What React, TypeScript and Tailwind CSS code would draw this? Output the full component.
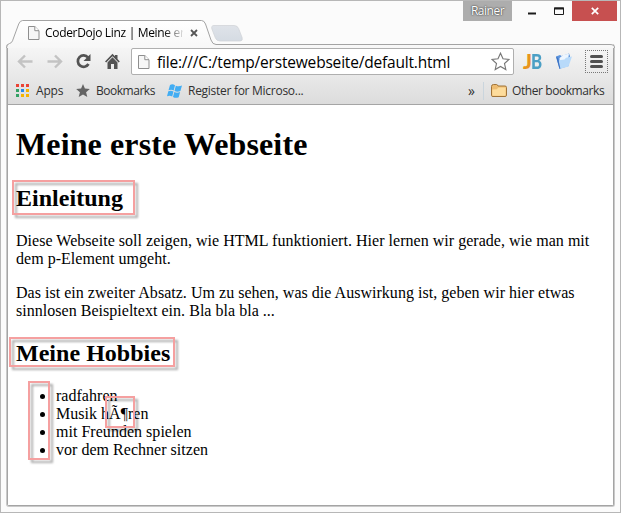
import React from 'react';

const ui = "font-['Open_Sans','Noto_Sans',sans-serif]";

function PageIcon({ className = '' }: { className?: string }) {
  return (
    <svg width="12" height="14" viewBox="0 0 12 14" className={className}>
      <path d="M.5.5h6.3l4.2 4.2v8.8H.5z" fill="#f6f6f6" stroke="#8e8e8e" />
      <path d="M6.8.5v4.2H11" fill="#fff" stroke="#8e8e8e" />
    </svg>
  );
}

function TabStrip() {
  return (
    <header className="relative z-10 h-[43px] shrink-0">
      <svg width="619" height="47" viewBox="1 1 619 47" className="absolute left-0 top-0">
        <defs>
          <linearGradient id="tab" x1="0" y1="0" x2="0" y2="1">
            <stop offset="0" stopColor="#fff" />
            <stop offset="1" stopColor="#f7f7f7" />
          </linearGradient>
          <linearGradient id="newtab" x1="0" y1="0" x2="0" y2="1">
            <stop offset="0" stopColor="#dfe3e9" />
            <stop offset="1" stopColor="#d5dbe3" />
          </linearGradient>
        </defs>
        <path
          d="M6.500 48q0-4 3-4.500 2-.3 3-2.700L18.700 24q1.300-3.500 4-3.500H201.500q2.700 0 4 3.500L211 40q1.500 4.500 5 4.500H610q4.500 0 4.500 3.500"
          fill="url(#tab)"
          stroke="#a3a3a3"
        />
        <path d="M214 25.500h20q3.500 0 4.600 3l3.500 9q1 3.500-2 3.500h-20q-3.500 0-4.700-3l-3.500-9q-1-3.500 2.100-3.500z" fill="url(#newtab)" stroke="#ced1d5" strokeWidth=".7" />
      </svg>
      <div className="relative flex h-full items-start">
        <div className="mt-[20px] flex h-[24px] w-[204px] items-center pl-[27px]">
          <PageIcon />
          <span className={`${ui} ml-[5px] w-[138px] whitespace-nowrap bg-linear-to-r from-black from-86% to-black/10 bg-clip-text text-[12px] leading-[18px] tracking-[-0.320px] text-transparent`}>
            CoderDojo Linz | Meine er
          </span>
          <svg width="8" height="8" viewBox="0 0 8 8" className="ml-[7px] shrink-0">
            <path d="M1 1l6 6M7 1L1 7" stroke="#555" strokeWidth="1.800" />
          </svg>
        </div>
        <div className="ml-auto mr-[3px] flex h-[20px]">
          <div className={`${ui} flex h-[20px] w-[49px] items-center justify-center bg-[#adadad] text-[12px] tracking-[-0.5px] text-white [text-shadow:0_0_2px_#333,0_0_1px_#555]`}>
            Rainer
          </div>
          <svg width="60" height="20" viewBox="0 0 60 20">
            <path d="M16 12.500h8" stroke="#1c1c1c" strokeWidth="2" />
            <path d="M42.500 13.500v-6.500h9v6.500z" fill="none" stroke="#1c1c1c" />
            <path d="M42 7.500h10" stroke="#1c1c1c" strokeWidth="2" />
          </svg>
          <div className="flex h-[20px] w-[45px] items-center justify-center bg-[#c75050]">
            <svg width="8" height="8" viewBox="0 0 8 8">
              <path d="M.8.8l6.400 6.400M7.200.8L.8 7.200" stroke="#fff" strokeWidth="1.700" />
            </svg>
          </div>
        </div>
      </div>
    </header>
  );
}

function AddressRow() {
  return (
    <div className="relative z-20 flex h-[34px] items-center">
      <svg width="124" height="34" viewBox="8 45 124 34" className="shrink-0">
        <g fill="none" stroke="#c3c3c3" strokeWidth="2.400">
          <path d="M19 62.500h13.500M25 56.500l-6 6 6 6" />
          <path d="M47.500 62.500H61M55 56.500l6 6-6 6" />
        </g>
        <path d="M88 58.500A5.700 5.700 0 1 0 88.500 65" fill="none" stroke="#535353" strokeWidth="2.700" />
        <path d="M90.500 55v7h-7z" fill="#535353" />
        <path d="M105 62.500l7.500-7.700 2.500 2.500V56h2.500v4l2.300 2.500-1.200 1.100-6.100-6.400-6.300 6.400z" fill="#535353" />
        <path d="M107.500 63.500l5-5.300 5 5.300V70h-3.500v-5h-3v5h-3.500z" fill="#535353" />
      </svg>
      <div className="mt-px -ml-px flex h-[27px] w-[383px] shrink-0 items-center rounded-[2px] border border-[#afafaf] bg-white pl-[6px] pr-[3px]">
        <PageIcon className="shrink-0" />
        <span className={`${ui} ml-[7px] whitespace-nowrap text-[15.500px] leading-[22px] text-black tracking-[-0.190px]`}>
          file:///C:/temp/erstewebseite/default.html
        </span>
        <svg width="19" height="19" viewBox="0 0 19 19" className="ml-auto shrink-0">
          <path d="M9.500 1.200l2.500 5.600 6 .6-4.500 4.100 1.300 6-5.300-3.100-5.300 3.100 1.300-6L1 7.400l6-.6z" fill="#fff" stroke="#777" strokeWidth="1.150" />
        </svg>
      </div>
      <div className="ml-[9px] flex w-[20px] text-[21px] leading-[24px] font-black tracking-[-1px] font-['Lato',sans-serif]">
        <span className="w-[8px] text-[#e8951d]">J</span>
        <span className="inline-block origin-left scale-x-[.8] text-[#4b9fc5]">B</span>
      </div>
      <svg width="18" height="18" viewBox="0 0 18 18" className="ml-[12px] shrink-0">
        <path d="M1 4.500l4-1.500 1.500 1L14 1.500 15 4 13.500 14l-9 2.800z" fill="#5b93dd" />
        <path d="M4.500 6l4-3.200 5.500-1-1.500 9-8 3z" fill="#edf6ff" />
        <path d="M4 8.200l5.500-.7 1.500-1.800L17 4.500 13.500 14.500 4.500 17z" fill="#b8dafa" />
        <path d="M1 4.500L4.500 17l.9-.5L3 6z" fill="#3d73c5" />
      </svg>
      <div className="ml-[12px] mt-px flex h-[23px] w-[23px] shrink-0 items-center justify-center border border-dotted border-[#777]">
        <div className="flex w-[13px] flex-col gap-[2px]">
          <i className="h-[3px] rounded-full bg-[#505050]" />
          <i className="h-[3px] rounded-full bg-[#505050]" />
          <i className="h-[3px] rounded-full bg-[#505050]" />
        </div>
      </div>
    </div>
  );
}

const apps = ['#ea4335', '#ea4335', '#ea4335', '#34a165', '#268bea', '#f5b400', '#34a165', '#f5b400', '#f5b400'];

function BookmarksRow() {
  return (
    <div className={`${ui} flex h-[25px] items-center whitespace-nowrap text-[12px] leading-[18px] text-[#303030]`}>
      <div className="ml-[8px] grid w-[13px] shrink-0 grid-cols-3 gap-[2px]">
        {apps.map((c, i) => (
          <i key={i} className="h-[3px] w-[3px]" style={{ background: c }} />
        ))}
      </div>
      <span className="ml-[7px] w-[40px] tracking-[-0.2px]">Apps</span>
      <svg width="14" height="13" viewBox="0 0 14 13" className="shrink-0">
        <path d="M7 0l1.900 4.600 4.900.4-3.700 3.200 1.200 4.800L7 10.400 2.700 13l1.200-4.800L.2 5l4.900-.4z" fill="#646464" />
      </svg>
      <span className="ml-[6px] w-[71px] tracking-[-0.480px]">Bookmarks</span>
      <svg width="15" height="14" viewBox="0 0 15 14" className="shrink-0">
        <path d="M3 1q2.500-1.500 5 .3L6.700 6.500Q4.300 5 1.500 6.300zM8.800 1.700Q11.500 3 15 1.600L13.400 7Q10.500 8.400 7.500 7zM1.300 7.300Q4 6 6.500 7.500L5.200 12.500Q2.800 11 0 12.300zM7.300 8Q10 9.400 13.100 8l-1.400 5.200Q8.800 14.600 6 13z" fill="#42adf3" />
      </svg>
      <span className="ml-[6px] tracking-[-0.280px]">Register for Microso...</span>
      <span className="ml-auto text-[14px]">»</span>
      <i className="ml-[8px] h-[18px] w-px bg-[#cad5dd]" />
      <svg width="16" height="13" viewBox="0 0 16 13" className="ml-[7px] shrink-0">
        <path d="M.5 11.500v-9q0-2 2-2h3q1 0 1.500 1.500h7q1.500 0 1.500 1.500v7.500q0 1.500-1.500 1.500H2q-1.500 0-1.500-1z" fill="#edbc71" stroke="#a17439" />
        <path d="M1.300 11V5.500l4.500-.3L7.300 3.500h7.300V11q0 .7-.7.700H2z" fill="#fddc9c" />
      </svg>
      <span className="ml-[5px] w-[101px] tracking-[-0.420px]">Other bookmarks</span>
    </div>
  );
}

const mark = 'pointer-events-none absolute border-2 border-[#f5a0a0] [filter:drop-shadow(3px_3px_1px_rgba(0,0,0,0.32))]';

function Page() {
  return (
    <main className="relative flex-1 overflow-hidden bg-white px-[8px] font-['Liberation_Serif',serif] text-[16px] leading-[18px] tracking-[0.027px] text-black">
      <h1 className="mt-[21px] text-[32px] font-bold leading-[37px] tracking-[0.120px]">Meine erste Webseite</h1>
      <h2 className="mt-[22px] text-[24px] font-bold leading-[27px]">Einleitung</h2>
      <p className="mt-[20px]">
        Diese Webseite soll zeigen, wie HTML funktioniert. Hier lernen wir gerade, wie man mit dem p-Element umgeht.
      </p>
      <p className="mt-[16px]">
        Das ist ein zweiter Absatz. Um zu sehen, was die Auswirkung ist, geben wir hier etwas sinnlosen Beispieltext ein. Bla bla bla ...
      </p>
      <h2 className="mt-[20px] text-[24px] font-bold leading-[27px]">Meine Hobbies</h2>
      <ul className="mt-[20px] list-disc pl-[40px]">
        <li>radfahren</li>
        <li>Musik hÃ¶ren</li>
        <li>mit Freunden spielen</li>
        <li>vor dem Rechner sitzen</li>
      </ul>
      <div className={`${mark} left-[4px] top-[75px] h-[35px] w-[123px]`} />
      <div className={`${mark} left-[1px] top-[232px] h-[30px] w-[166px]`} />
      <div className={`${mark} left-[20px] top-[276px] h-[79px] w-[22px]`} />
      <div className={`${mark} left-[97px] top-[291px] h-[32px] w-[30px]`} />
    </main>
  );
}

export default function App() {
  return (
    <div className="flex h-[513px] w-[621px] flex-col overflow-hidden border border-[#b7b7b7] bg-[#fbfbfb]">
      <TabStrip />
      <section className="ml-[5px] flex h-[463px] w-[609px] flex-col rounded-[3px] border-x border-b border-[#c9c9c9]">
        <div className="flex flex-1 flex-col rounded-[2px] border-x border-b border-[#a4a4a4]">
          <div className="h-[61px] shrink-0 border-b border-[#a5a5a5] bg-linear-to-b from-[#f7f7f7] to-[#dcdcdc]">
            <AddressRow />
            <BookmarksRow />
          </div>
          <Page />
        </div>
      </section>
    </div>
  );
}
